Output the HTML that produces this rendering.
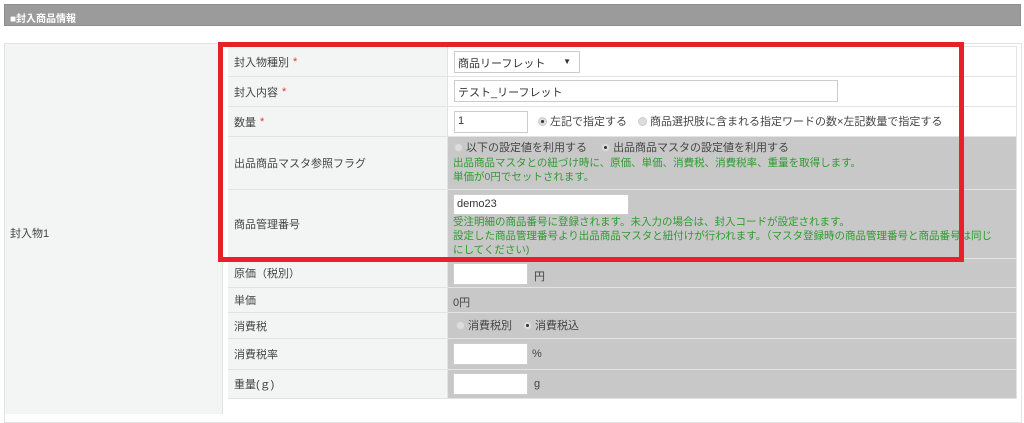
<!DOCTYPE html>
<html><head><meta charset="utf-8"><style>
*{margin:0;padding:0;box-sizing:border-box}
body{width:1024px;height:412px;background:#fff;position:relative;overflow:hidden;font-family:"Liberation Sans","Noto Sans CJK JP",sans-serif;font-size:11px;color:#444}
.a{position:absolute}
.hdr{left:4px;top:4px;width:1017px;height:22px;background:#9b9b9b;border:1px solid #8e8e8e;color:#fff;font-weight:bold;font-size:10px;padding:5px 0 0 5px}
.outer{left:4px;top:43px;width:1018px;height:380px;border:1px solid #e3e3e3;background:#fff}
.lc{left:5px;top:44px;width:218px;height:370px;background:#f3f4f4;border-right:1px solid #e3e3e3}
.lab{left:228px;width:220px;background:#f3f4f4;border-bottom:1px solid #e3e3e3;border-right:1px solid #e3e3e3;padding-left:6px;display:flex;align-items:center}
.val{left:448px;width:568px;border-bottom:1px solid #e3e3e3;padding-left:5px}
.w{background:#fff}.g{background:#c8c8c8}
.inp{position:absolute;background:#fff;border:1px solid #ccc;height:22px;padding:3px 3px;font-size:11px;color:#333}
.req{color:#e33;margin-left:4px}
.grn{color:#2e9b2e;line-height:14px;white-space:nowrap;font-size:10.5px}
.ln{line-height:14px;white-space:nowrap}
.rad{display:inline-block;width:9px;height:9px;border-radius:50%;background:#ddd;border:1px solid #ccc;vertical-align:-1px;margin-right:3px;position:relative}
.rad.on::after{content:"";position:absolute;left:2px;top:2px;width:3px;height:3px;border-radius:50%;background:#333}
.red{left:218px;top:42px;width:746px;height:220px;border:5px solid #e8202a}
</style></head><body>
<div class="a hdr">■封入商品情報</div>
<div class="a outer"></div>
<div class="a lc"><div style="position:absolute;left:5px;top:181px">封入物1</div></div>
<div class="a" style="left:228px;top:46px;width:788px;height:1px;background:#e3e3e3"></div>

<div class="a lab" style="top:47px;height:30px">封入物種別<span class="req">*</span></div>
<div class="a val w" style="top:47px;height:30px"><div class="inp" style="left:6px;top:4px;width:126px">商品リーフレット<span style="position:absolute;right:8px;font-size:8px;top:5px">▼</span></div></div>

<div class="a lab" style="top:77px;height:30px">封入内容<span class="req">*</span></div>
<div class="a val w" style="top:77px;height:30px"><div class="inp" style="left:6px;top:3px;width:384px">テスト_リーフレット</div></div>

<div class="a lab" style="top:107px;height:30px">数量<span class="req">*</span></div>
<div class="a val w" style="top:107px;height:30px"><div class="inp" style="left:6px;top:4px;width:74px">1</div><div class="ln" style="position:absolute;left:90px;top:8px"><span class="rad on"></span>左記で指定する　<span class="rad"></span>商品選択肢に含まれる指定ワードの数×左記数量で指定する</div></div>

<div class="a lab" style="top:137px;height:53px">出品商品マスタ参照フラグ</div>
<div class="a val g" style="top:137px;height:53px"><div class="ln" style="position:absolute;left:6px;top:4px"><span class="rad"></span>以下の設定値を利用する　 <span class="rad on"></span>出品商品マスタの設定値を利用する</div><div class="grn" style="position:absolute;left:5px;top:19px">出品商品マスタとの紐づけ時に、原価、単価、消費税、消費税率、重量を取得します。<br>単価が0円でセットされます。</div></div>

<div class="a lab" style="top:190px;height:69px">商品管理番号</div>
<div class="a val g" style="top:190px;height:69px"><div class="inp" style="left:5px;top:4px;width:176px;height:21px">demo23</div><div class="grn" style="position:absolute;left:5px;top:25px">受注明細の商品番号に登録されます。未入力の場合は、封入コードが設定されます。<br>設定した商品管理番号より出品商品マスタと紐付けが行われます。（マスタ登録時の商品管理番号と商品番号は同じ<br>にしてください)</div></div>

<div class="a lab" style="top:259px;height:29px">原価（税別）</div>
<div class="a val g" style="top:259px;height:29px"><div class="inp" style="left:5px;top:4px;width:75px"></div><span style="position:absolute;left:86px;top:9px">円</span></div>

<div class="a lab" style="top:288px;height:25px">単価</div>
<div class="a val g" style="top:288px;height:25px"><span style="position:absolute;left:5px;top:6px">0円</span></div>

<div class="a lab" style="top:313px;height:26px">消費税</div>
<div class="a val g" style="top:313px;height:26px"><div class="ln" style="position:absolute;left:8px;top:6px"><span class="rad"></span>消費税別　<span class="rad on"></span>消費税込</div></div>

<div class="a lab" style="top:339px;height:31px">消費税率</div>
<div class="a val g" style="top:339px;height:31px"><div class="inp" style="left:5px;top:4px;width:75px"></div><span style="position:absolute;left:84px;top:9px">%</span></div>

<div class="a lab" style="top:370px;height:29px">重量(ｇ)</div>
<div class="a val g" style="top:370px;height:29px"><div class="inp" style="left:5px;top:3px;width:75px"></div><span style="position:absolute;left:86px;top:8px">g</span></div>
<div class="a" style="left:1016px;top:46px;width:1px;height:353px;background:#e3e3e3"></div>

<div class="a red"></div>
</body></html>
